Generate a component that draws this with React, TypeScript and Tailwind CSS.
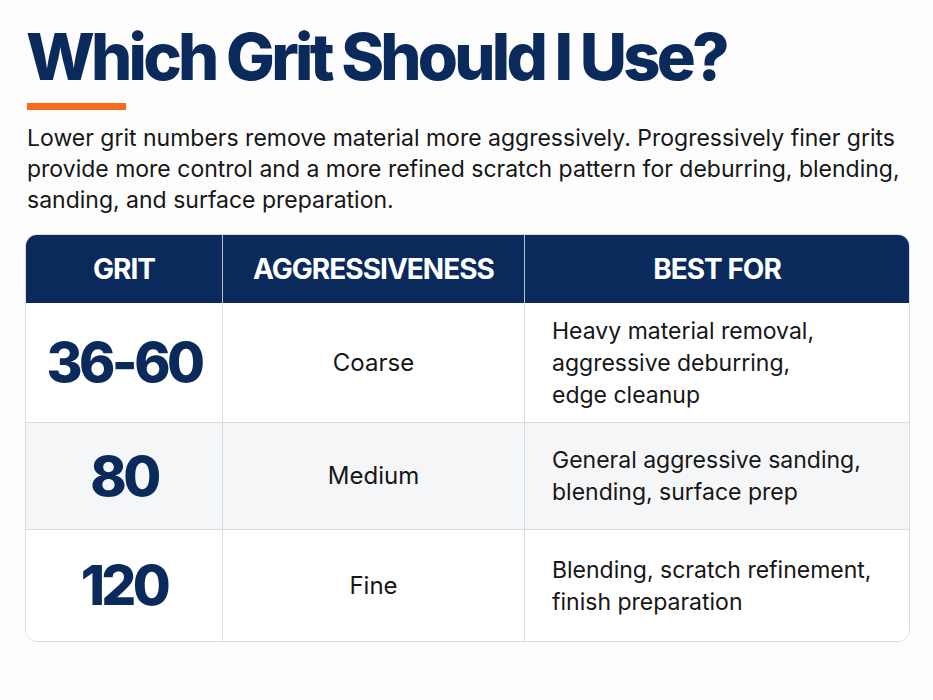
import React from "react";

const rows = [
  { grit: "36-60", agg: "Coarse", best: ["Heavy material removal,", "aggressive deburring,", "edge cleanup"], h: "h-[119px]", bg: "bg-white" },
  { grit: "80", agg: "Medium", best: ["General aggressive sanding,", "blending, surface prep"], h: "h-[107px]", bg: "bg-[#f5f6f8]" },
  { grit: "120", agg: "Fine", best: ["Blending, scratch refinement,", "finish preparation"], h: "h-[112px]", bg: "bg-white" },
];

export default function App() {
  return (
    <div className="w-[933px] h-[700px] bg-[#fdfdfd] px-[25px] pt-[16px]" style={{ fontFamily: "Inter, 'Noto Sans', sans-serif" }}>
      <h1 className="text-[65px] leading-[82px] font-extrabold tracking-[-0.058em] text-[#0b2a5c] pl-[1px]">
        Which Grit Should I Use?
      </h1>
      <div className="mt-[5px] ml-[2px] w-[99px] h-[7px] bg-[#f56a1c]" />
      <p className="mt-[13px] ml-[2px] text-[23px] leading-[31px] text-[#161616]">
        Lower grit numbers remove material more aggressively. Progressively finer grits provide more control and a more refined scratch pattern for deburring, blending, sanding, and surface preparation.
      </p>
      <div className="mt-[18px] w-[885px] rounded-[12px] border border-[#d8dce3] overflow-hidden">
        <div className="grid grid-cols-[197px_302px_1fr] h-[68px] bg-[#0b2a5c] text-white text-[28px] font-bold tracking-[-0.035em]">
          <div className="flex items-center justify-center border-r border-[#b8bfcc]">GRIT</div>
          <div className="flex items-center justify-center border-r border-[#b8bfcc]">AGGRESSIVENESS</div>
          <div className="flex items-center justify-center">BEST FOR</div>
        </div>
        {rows.map((r, i) => (
          <div key={r.grit} className={`grid grid-cols-[197px_302px_1fr] ${r.h} ${r.bg} ${i > 0 ? "border-t border-[#d8dce3]" : ""}`}>
            <div className="flex items-center justify-center border-r border-[#d8dce3] text-[55px] font-extrabold tracking-[-0.065em] text-[#0b2a5c]">
              {r.grit}
            </div>
            <div className="flex items-center justify-center border-r border-[#d8dce3] text-[24px] text-[#161616]">
              {r.agg}
            </div>
            <div className="flex flex-col justify-center pl-[27px] text-[23px] leading-[32px] text-[#161616]">
              {r.best.map((l) => (
                <div key={l}>{l}</div>
              ))}
            </div>
          </div>
        ))}
      </div>
    </div>
  );
}
